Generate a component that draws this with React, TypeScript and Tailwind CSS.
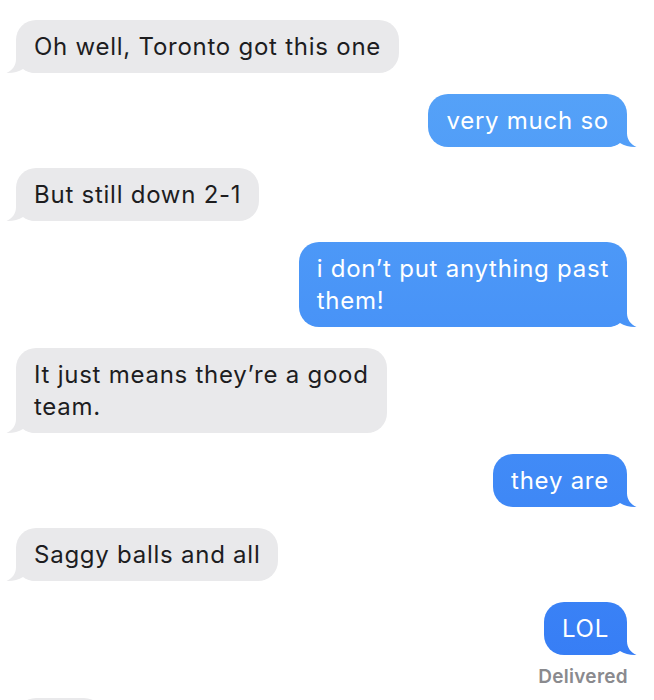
import React from "react";

type Msg = { from: "me" | "them"; lines: string[] };

const messages: Msg[] = [
  { from: "them", lines: ["Oh well, Toronto got this one"] },
  { from: "me", lines: ["very much so"] },
  { from: "them", lines: ["But still down 2-1"] },
  { from: "me", lines: ["i don\u2019t put anything past", "them!"] },
  { from: "them", lines: ["It just means they\u2019re a good", "team."] },
  { from: "me", lines: ["they are"] },
  { from: "them", lines: ["Saggy balls and all"] },
  { from: "me", lines: ["LOL"] },
];

function Bubble({ msg }: { msg: Msg }) {
  const mine = msg.from === "me";
  return (
    <div className={mine ? "flex justify-end pr-[27px]" : "flex justify-start pl-[16px]"}>
      <div
        className={
          mine
            ? "relative rounded-[20px] bg-gradient-to-b from-[#5aa7f8] to-[#357bf5] bg-fixed px-[18px] py-[10.5px] text-[24px] leading-[32px] tracking-[0.75px] text-white"
            : "relative rounded-[20px] bg-[#e9e9eb] px-[18px] py-[10.5px] text-[24px] leading-[32px] tracking-[0.75px] text-[#1d1d1f]"
        }
      >
        {/* tail */}
        {mine ? (
          <div className="absolute bottom-0 right-[-10px] h-[22px] w-[30px] bg-gradient-to-b from-[#5aa7f8] to-[#357bf5] bg-fixed [clip-path:path('M20_0_L20_8_C20_15_24_19.5_29.5_22_C23.5_22.3_17.5_21_13_18_C10_20.5_5_22_0_22_L0_0_Z')]" />
        ) : (
          <div className="absolute bottom-0 left-[-10px] h-[22px] w-[30px] bg-[#e9e9eb] [clip-path:path('M10_0_L10_8_C10_15_6_19.5_0.5_22_C6.5_22.3_12.5_21_17_18_C20_20.5_25_22_30_22_L30_0_Z')]" />
        )}
        <div className="relative">
          {msg.lines.map((l, i) => (
            <div key={i} className="whitespace-nowrap">
              {l}
            </div>
          ))}
        </div>
      </div>
    </div>
  );
}

export default function App() {
  return (
    <div
      className="h-[700px] w-[654px] overflow-hidden bg-white pt-[20px]"
      style={{ fontFamily: "Inter, 'Noto Sans', sans-serif" }}
    >
      <div className="flex flex-col gap-[21px]">
        {messages.map((m, i) => (
          <Bubble key={i} msg={m} />
        ))}
      </div>

      {/* Delivered */}
      <div className="mt-[11px] pr-[26px] text-right text-[19px] font-semibold leading-[22px] tracking-[0.3px] text-[#8a8a8e]">
        Delivered
      </div>

      {/* next bubble peeking in */}
      <div className="mt-[10px] pl-[16px]">
        <div className="h-[40px] w-[88px] rounded-[20px] bg-[#e9e9eb]" />
      </div>
    </div>
  );
}
